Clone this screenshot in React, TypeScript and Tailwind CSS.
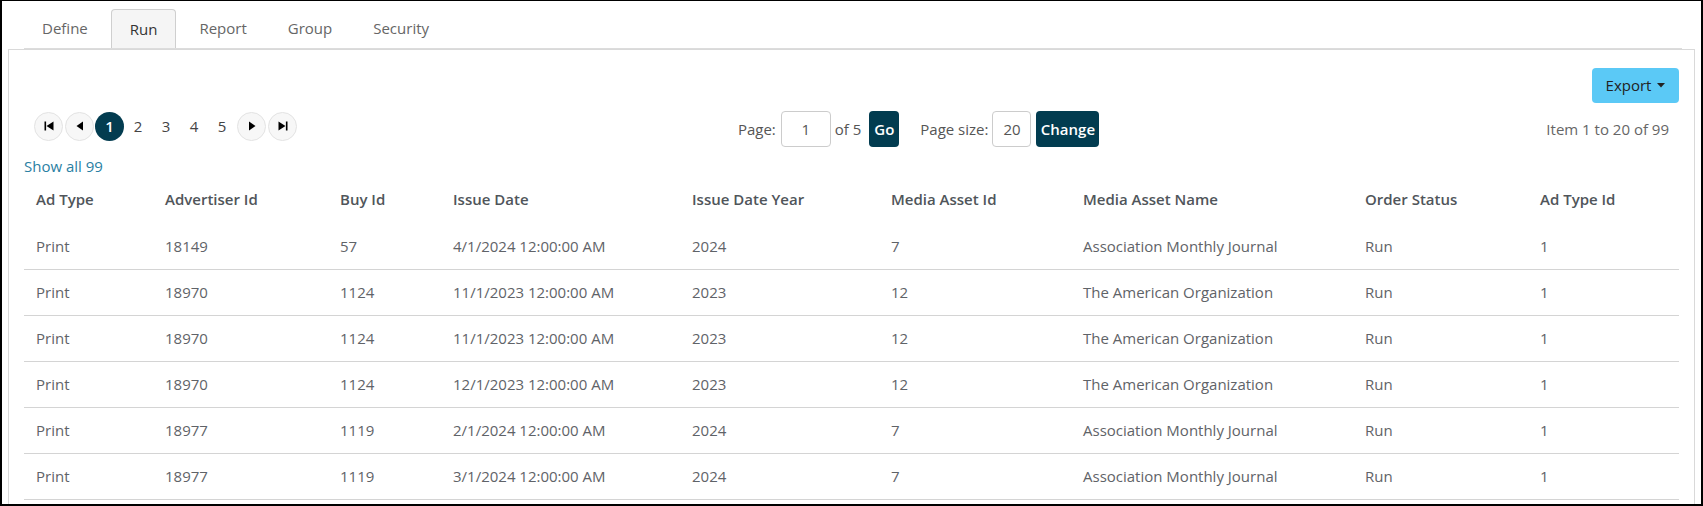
import React from "react";

const TABS = ["Define", "Run", "Report", "Group", "Security"];

const COLUMNS = [
  { name: "Ad Type", width: "w-[129px]" },
  { name: "Advertiser Id", width: "w-[175px]" },
  { name: "Buy Id", width: "w-[113px]" },
  { name: "Issue Date", width: "w-[239px]" },
  { name: "Issue Date Year", width: "w-[199px]" },
  { name: "Media Asset Id", width: "w-[192px]" },
  { name: "Media Asset Name", width: "w-[282px]" },
  { name: "Order Status", width: "w-[175px]" },
  { name: "Ad Type Id", width: "w-[151px]" },
];

const ROWS = [
  ["Print", "18149", "57", "4/1/2024 12:00:00 AM", "2024", "7", "Association Monthly Journal", "Run", "1"],
  ["Print", "18970", "1124", "11/1/2023 12:00:00 AM", "2023", "12", "The American Organization", "Run", "1"],
  ["Print", "18970", "1124", "11/1/2023 12:00:00 AM", "2023", "12", "The American Organization", "Run", "1"],
  ["Print", "18970", "1124", "12/1/2023 12:00:00 AM", "2023", "12", "The American Organization", "Run", "1"],
  ["Print", "18977", "1119", "2/1/2024 12:00:00 AM", "2024", "7", "Association Monthly Journal", "Run", "1"],
  ["Print", "18977", "1119", "3/1/2024 12:00:00 AM", "2024", "7", "Association Monthly Journal", "Run", "1"],
];

const NavCircle = ({ children }: { children: React.ReactNode }) => (
  <button className="w-[29px] h-[29px] rounded-full bg-[#f7f7f7] border border-[#e3e3e3] flex items-center justify-center">
    {children}
  </button>
);

const Pager = () => (
  <div className="flex items-center pl-[10px]">
    <NavCircle>
      <svg width="10" height="10" viewBox="0 0 10 10">
        <rect x="0.5" y="0.5" width="1.6" height="9" fill="#000" />
        <polygon points="9.5,0.5 9.5,9.5 2.5,5" fill="#000" />
      </svg>
    </NavCircle>
    <div className="ml-[2px]">
      <NavCircle>
        <svg width="8" height="10" viewBox="0 0 8 10">
          <polygon points="7,0.5 7,9.5 0.5,5" fill="#000" />
        </svg>
      </NavCircle>
    </div>
    <span className="ml-[1px] w-[29px] h-[29px] rounded-full bg-[#033c50] text-white flex items-center justify-center text-[15px] font-semibold">
      1
    </span>
    {["2", "3", "4", "5"].map((n) => (
      <span key={n} className="w-[28px] h-[29px] flex items-center justify-center text-[15px] text-[#444]">
        {n}
      </span>
    ))}
    <div className="ml-[1px]">
      <NavCircle>
        <svg width="8" height="10" viewBox="0 0 8 10">
          <polygon points="1,0.5 1,9.5 7.5,5" fill="#000" />
        </svg>
      </NavCircle>
    </div>
    <div className="ml-[2px]">
      <NavCircle>
        <svg width="10" height="10" viewBox="0 0 10 10">
          <polygon points="0.5,0.5 0.5,9.5 7.5,5" fill="#000" />
          <rect x="7.9" y="0.5" width="1.6" height="9" fill="#000" />
        </svg>
      </NavCircle>
    </div>
  </div>
);

const PageControls = () => (
  <div className="flex-1 flex items-center justify-center text-[15px] text-[#555] mr-[6px]">
    <span>Page:</span>
    <input
      readOnly
      value="1"
      className="ml-[5px] w-[50px] h-[36px] border border-[#ccc] rounded-[4px] text-center text-[15px] text-[#555] outline-none"
    />
    <span className="ml-[4px]">of 5</span>
    <button className="ml-[8px] w-[30px] h-[36px] rounded-[4px] bg-[#023c50] text-white font-semibold text-[15px]">
      Go
    </button>
    <span className="ml-[21px]">Page size:</span>
    <input
      readOnly
      value="20"
      className="ml-[4px] w-[39px] h-[36px] border border-[#ccc] rounded-[4px] text-center text-[15px] text-[#555] outline-none"
    />
    <button className="ml-[5px] w-[63px] h-[36px] rounded-[4px] bg-[#023c50] text-white font-semibold text-[15px]">
      Change
    </button>
  </div>
);

export default function App() {
  return (
    <div
      className="w-[1703px] h-[506px] overflow-hidden bg-white border-t border-x-2 border-b-2 border-black box-border"
      style={{ fontFamily: '"Open Sans", "Liberation Sans", sans-serif' }}
    >
      <div className="mx-[6px] pt-[8px]">
        {/* Tabs */}
        <div className="ml-[16px] mr-[13px] flex gap-[5px] border-b border-[#dcdcdc]">
          {TABS.map((tab) =>
            tab === "Run" ? (
              <div
                key={tab}
                className="h-[39px] px-[18px] flex items-center bg-[#f5f5f5] border border-b-0 border-[#cfcfcf] rounded-t-[4px] text-[15px] text-[#333]"
              >
                {tab}
              </div>
            ) : (
              <div key={tab} className="h-[39px] px-[18px] flex items-center text-[15px] text-[#666]">
                {tab}
              </div>
            )
          )}
        </div>

        {/* Panel */}
        <div className="border border-[#d9d9d9] px-[15px] pt-[18px] pb-[20px]">
          <div className="flex justify-end">
            <button className="w-[87px] h-[35px] rounded-[4px] bg-[#5bc9f6] text-[#222] text-[15px] flex items-center justify-center gap-[6px]">
              Export
              <svg width="8" height="5" viewBox="0 0 8 5">
                <polygon points="0,0 8,0 4,4.5" fill="#222" />
              </svg>
            </button>
          </div>

          <div className="mt-[8px] flex items-center h-[36px]">
            <div className="-mt-[6px]">
              <Pager />
            </div>
            <PageControls />
            <div className="pr-[10px] text-[15px] text-[#666]">Item 1 to 20 of 99</div>
          </div>

          <div className="mt-[9px] h-[20px] flex items-center text-[15px] text-[#2a80a3]">Show all 99</div>

          <table className="table-fixed w-full border-collapse">
            <colgroup>
              {COLUMNS.map((c) => (
                <col key={c.name} className={c.width} />
              ))}
            </colgroup>
            <thead>
              <tr className="h-[47px]">
                {COLUMNS.map((c) => (
                  <th key={c.name} className="pl-[12px] text-left font-semibold text-[15px] text-[#50555a]">
                    {c.name}
                  </th>
                ))}
              </tr>
            </thead>
            <tbody>
              {ROWS.map((row, i) => (
                <tr key={i} className="h-[46px] border-b border-[#d4d4d4]">
                  {row.map((cell, j) => (
                    <td key={j} className="pl-[12px] text-[15px] text-[#5f6368]">
                      {cell}
                    </td>
                  ))}
                </tr>
              ))}
            </tbody>
          </table>
        </div>
      </div>
    </div>
  );
}
